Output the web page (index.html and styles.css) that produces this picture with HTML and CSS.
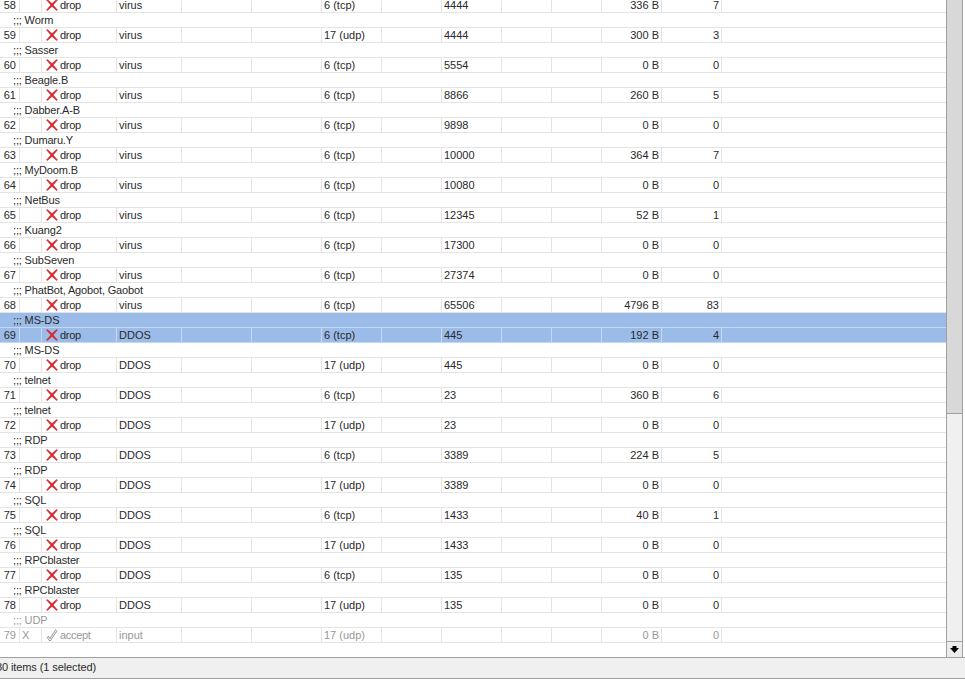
FILE: index.html
```html
<!DOCTYPE html>
<html lang="en">
<head>
<meta charset="utf-8">
<title>Firewall rules</title>
<link rel="stylesheet" href="styles.css">
</head>
<body>
<svg class="defs" width="0" height="0" aria-hidden="true"><defs>
<symbol id="x" viewBox="0 0 12 12"><path d="M0.5 1 1.5 0.5 6 4.6 10.5 0.5 11.5 1 7.2 6 11.5 11 10.5 11.5 6 7.4 1.5 11.5 0.5 11 4.8 6Z" fill="#e0262a" stroke="#cc3035" stroke-width=".5"/></symbol>
<symbol id="c" viewBox="0 0 12 12"><path d="M1.5 7.5 4 11 10.5 1" fill="none" stroke="#999" stroke-width="2.4"/><path d="M1.5 7.5 4 11 10.5 1" fill="none" stroke="#f4f4f4" stroke-width="1"/></symbol>
</defs></svg>
<div class="main">
<div class="list">
<div class="row"><span class="n">58</span><span></span><span class="a"><svg><use href="#x"/></svg>drop</span><span>virus</span><span></span><span></span><span>6 (tcp)</span><span></span><span>4444</span><span></span><span></span><span class="r">336 B</span><span class="r">7</span><span></span></div>
<div class="cm">;;; Worm</div>
<div class="row"><span class="n">59</span><span></span><span class="a"><svg><use href="#x"/></svg>drop</span><span>virus</span><span></span><span></span><span>17 (udp)</span><span></span><span>4444</span><span></span><span></span><span class="r">300 B</span><span class="r">3</span><span></span></div>
<div class="cm">;;; Sasser</div>
<div class="row"><span class="n">60</span><span></span><span class="a"><svg><use href="#x"/></svg>drop</span><span>virus</span><span></span><span></span><span>6 (tcp)</span><span></span><span>5554</span><span></span><span></span><span class="r">0 B</span><span class="r">0</span><span></span></div>
<div class="cm">;;; Beagle.B</div>
<div class="row"><span class="n">61</span><span></span><span class="a"><svg><use href="#x"/></svg>drop</span><span>virus</span><span></span><span></span><span>6 (tcp)</span><span></span><span>8866</span><span></span><span></span><span class="r">260 B</span><span class="r">5</span><span></span></div>
<div class="cm">;;; Dabber.A-B</div>
<div class="row"><span class="n">62</span><span></span><span class="a"><svg><use href="#x"/></svg>drop</span><span>virus</span><span></span><span></span><span>6 (tcp)</span><span></span><span>9898</span><span></span><span></span><span class="r">0 B</span><span class="r">0</span><span></span></div>
<div class="cm">;;; Dumaru.Y</div>
<div class="row"><span class="n">63</span><span></span><span class="a"><svg><use href="#x"/></svg>drop</span><span>virus</span><span></span><span></span><span>6 (tcp)</span><span></span><span>10000</span><span></span><span></span><span class="r">364 B</span><span class="r">7</span><span></span></div>
<div class="cm">;;; MyDoom.B</div>
<div class="row"><span class="n">64</span><span></span><span class="a"><svg><use href="#x"/></svg>drop</span><span>virus</span><span></span><span></span><span>6 (tcp)</span><span></span><span>10080</span><span></span><span></span><span class="r">0 B</span><span class="r">0</span><span></span></div>
<div class="cm">;;; NetBus</div>
<div class="row"><span class="n">65</span><span></span><span class="a"><svg><use href="#x"/></svg>drop</span><span>virus</span><span></span><span></span><span>6 (tcp)</span><span></span><span>12345</span><span></span><span></span><span class="r">52 B</span><span class="r">1</span><span></span></div>
<div class="cm">;;; Kuang2</div>
<div class="row"><span class="n">66</span><span></span><span class="a"><svg><use href="#x"/></svg>drop</span><span>virus</span><span></span><span></span><span>6 (tcp)</span><span></span><span>17300</span><span></span><span></span><span class="r">0 B</span><span class="r">0</span><span></span></div>
<div class="cm">;;; SubSeven</div>
<div class="row"><span class="n">67</span><span></span><span class="a"><svg><use href="#x"/></svg>drop</span><span>virus</span><span></span><span></span><span>6 (tcp)</span><span></span><span>27374</span><span></span><span></span><span class="r">0 B</span><span class="r">0</span><span></span></div>
<div class="cm">;;; PhatBot, Agobot, Gaobot</div>
<div class="row"><span class="n">68</span><span></span><span class="a"><svg><use href="#x"/></svg>drop</span><span>virus</span><span></span><span></span><span>6 (tcp)</span><span></span><span>65506</span><span></span><span></span><span class="r">4796 B</span><span class="r">83</span><span></span></div>
<div class="cm sel">;;; MS-DS</div>
<div class="row sel"><span class="n">69</span><span></span><span class="a"><svg><use href="#x"/></svg>drop</span><span>DDOS</span><span></span><span></span><span>6 (tcp)</span><span></span><span>445</span><span></span><span></span><span class="r">192 B</span><span class="r">4</span><span></span></div>
<div class="cm">;;; MS-DS</div>
<div class="row"><span class="n">70</span><span></span><span class="a"><svg><use href="#x"/></svg>drop</span><span>DDOS</span><span></span><span></span><span>17 (udp)</span><span></span><span>445</span><span></span><span></span><span class="r">0 B</span><span class="r">0</span><span></span></div>
<div class="cm">;;; telnet</div>
<div class="row"><span class="n">71</span><span></span><span class="a"><svg><use href="#x"/></svg>drop</span><span>DDOS</span><span></span><span></span><span>6 (tcp)</span><span></span><span>23</span><span></span><span></span><span class="r">360 B</span><span class="r">6</span><span></span></div>
<div class="cm">;;; telnet</div>
<div class="row"><span class="n">72</span><span></span><span class="a"><svg><use href="#x"/></svg>drop</span><span>DDOS</span><span></span><span></span><span>17 (udp)</span><span></span><span>23</span><span></span><span></span><span class="r">0 B</span><span class="r">0</span><span></span></div>
<div class="cm">;;; RDP</div>
<div class="row"><span class="n">73</span><span></span><span class="a"><svg><use href="#x"/></svg>drop</span><span>DDOS</span><span></span><span></span><span>6 (tcp)</span><span></span><span>3389</span><span></span><span></span><span class="r">224 B</span><span class="r">5</span><span></span></div>
<div class="cm">;;; RDP</div>
<div class="row"><span class="n">74</span><span></span><span class="a"><svg><use href="#x"/></svg>drop</span><span>DDOS</span><span></span><span></span><span>17 (udp)</span><span></span><span>3389</span><span></span><span></span><span class="r">0 B</span><span class="r">0</span><span></span></div>
<div class="cm">;;; SQL</div>
<div class="row"><span class="n">75</span><span></span><span class="a"><svg><use href="#x"/></svg>drop</span><span>DDOS</span><span></span><span></span><span>6 (tcp)</span><span></span><span>1433</span><span></span><span></span><span class="r">40 B</span><span class="r">1</span><span></span></div>
<div class="cm">;;; SQL</div>
<div class="row"><span class="n">76</span><span></span><span class="a"><svg><use href="#x"/></svg>drop</span><span>DDOS</span><span></span><span></span><span>17 (udp)</span><span></span><span>1433</span><span></span><span></span><span class="r">0 B</span><span class="r">0</span><span></span></div>
<div class="cm">;;; RPCblaster</div>
<div class="row"><span class="n">77</span><span></span><span class="a"><svg><use href="#x"/></svg>drop</span><span>DDOS</span><span></span><span></span><span>6 (tcp)</span><span></span><span>135</span><span></span><span></span><span class="r">0 B</span><span class="r">0</span><span></span></div>
<div class="cm">;;; RPCblaster</div>
<div class="row"><span class="n">78</span><span></span><span class="a"><svg><use href="#x"/></svg>drop</span><span>DDOS</span><span></span><span></span><span>17 (udp)</span><span></span><span>135</span><span></span><span></span><span class="r">0 B</span><span class="r">0</span><span></span></div>
<div class="cm off">;;; UDP</div>
<div class="row off"><span class="n">79</span><span>X</span><span class="a"><svg><use href="#c"/></svg>accept</span><span>input</span><span></span><span></span><span>17 (udp)</span><span></span><span></span><span></span><span></span><span class="r">0 B</span><span class="r">0</span><span></span></div>
</div>
<div class="scroll">
<div class="track"></div>
<div class="thumb"></div>
<div class="btn"><svg width="9" height="7" viewBox="0 0 9 7"><path d="M0 2H2.5V0H6.5V2H9L4.5 7Z"/></svg></div>
</div>
</div>
<div class="status"><span class="count">80 items (1 selected)</span></div>
</body>
</html>
```

FILE: styles.css
```css
html, body { margin: 0; padding: 0; height: 681px; overflow: hidden; background: #fff; }
body { font: 11px/15px "Liberation Sans", Arial, sans-serif; color: #2a2a2a; display: flex; flex-direction: column; }
.defs { display: block; height: 0; }
.main { display: flex; height: 657px; overflow: hidden; padding-right: 2px; flex: none; }
.list { flex: 1; margin-top: -2px; min-width: 0; }
.row, .cm { height: 15px; box-sizing: border-box; border-bottom: 1px solid #e4e4e4; line-height: 14px; white-space: nowrap; }
.row { display: grid; grid-template-columns: 20px 22px 75px 65px 70px 70px 60px 60px 60px 50px 50px 60px 60px 1fr; }
.row > span { border-right: 1px solid #e4e4e4; padding: 0 2px; overflow: hidden; box-sizing: border-box; }
.row > span:last-child { border-right: 0; }
.row > .n { text-align: right; padding-right: 3px; }
.row > .r { text-align: right; padding-right: 2px; }
.row > .a { display: flex; align-items: center; padding-left: 4px; letter-spacing: -0.3px; }
.a svg { width: 12px; height: 12px; margin-right: 2px; flex: none; }
.cm { padding-left: 13px; letter-spacing: -0.15px; }
.sel { background: #9bbbe8; border-bottom-color: #c5d8f3; }
.sel > span { border-right-color: #c5d8f3; }
.off { color: #999; }
.scroll { width: 17px; flex: none; display: flex; flex-direction: column; box-sizing: border-box; border-left: 1px solid #a0a0a0; border-right: 1px solid #a0a0a0; }
.track { height: 413px; flex: none; background: #d8d8d8; border-bottom: 1px solid #a0a0a0; }
.thumb { flex: 1; background: #f0f0f0; }
.btn { height: 16px; flex: none; box-sizing: border-box; background: #ececec; border-top: 1px solid #a0a0a0; display: flex; align-items: center; justify-content: center; }
.status { height: 20px; flex: none; background: #f0f0f0; border-top: 1px solid #a0a0a0; border-bottom: 1px solid #a0a0a0; overflow: hidden; line-height: 19px; }
.count { margin-left: -4px; display: block; letter-spacing: -0.1px; }
```
